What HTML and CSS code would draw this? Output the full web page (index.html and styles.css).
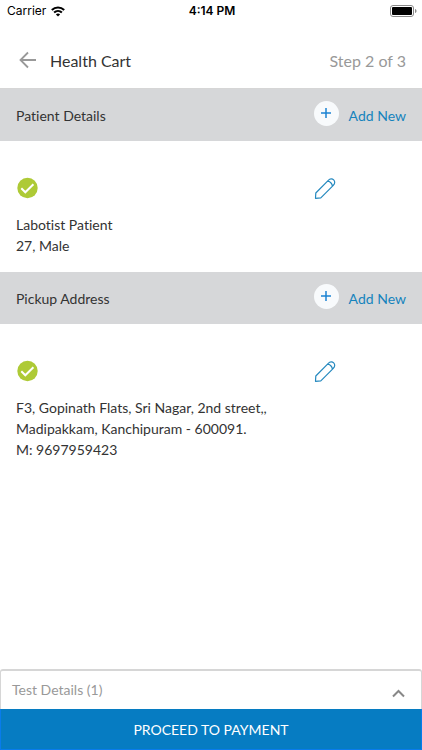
FILE: index.html
```html
<!DOCTYPE html>
<html lang="en">
<head>
<meta charset="utf-8">
<meta name="viewport" content="width=device-width, initial-scale=1">
<title>Health Cart</title>
<link rel="stylesheet" href="styles.css">
</head>
<body>
<div class="status">
  <div class="carrier">
    <span>Carrier</span>
    <svg width="14" height="11" viewBox="0 0 14 11" fill="none" stroke="#000" stroke-width="2"><path d="M.8 4C4.300.6 9.700.6 13.200 4M3.100 6.500C5.300 4.400 8.700 4.400 10.900 6.500"/><path d="M7 10.500 4.900 8.400C6.100 7.300 7.900 7.300 9.100 8.400Z" fill="#000" stroke="none"/></svg>
  </div>
  <span class="time">4:14 PM</span>
  <svg class="battery" width="27" height="12" viewBox="0 0 27 12"><rect x=".5" y=".5" width="23" height="11" rx="2.500" fill="#fff" stroke="#8a8a8a"/><rect x="2" y="2" width="20" height="8" rx="1" fill="#000"/><path d="M25 4c2 .6 2 3.400 0 4z" fill="#8a8a8a"/></svg>
</div>
<header class="header">
  <button class="icon-button" aria-label="Back">
    <svg width="18" height="18" viewBox="0 0 18 18" fill="none" stroke="#999" stroke-width="1.800"><path d="M17 9H2M9 1.500 1.500 9 9 16.500"/></svg>
  </button>
  <h1 class="title">Health Cart</h1>
  <span class="step">Step 2 of 3</span>
</header>
<main class="main">
  <section>
    <div class="bar">
      <h2 class="bar-title">Patient Details</h2>
      <button class="add"><span class="plus"><svg width="10" height="10" viewBox="0 0 10 10" stroke="#1b82d2" stroke-width="1.500"><path d="M5 0V10M0 5H10"/></svg></span>Add New</button>
    </div>
    <div class="entry">
      <div class="entry-icons">
        <svg width="22" height="22" viewBox="0 0 22 22" fill="none"><circle cx="11.500" cy="11" r="10.200" fill="#aeca36"/><path d="M5.300 11.300 9.300 15.300 17.400 7.200" stroke="#fff" stroke-width="2"/></svg>
        <button class="icon-button" aria-label="Edit patient">
          <svg width="22" height="22" viewBox="0 0 22 22" fill="none" stroke="#2589bf" stroke-width="1.200" stroke-linejoin="round"><path d="M1.500 21.300 1.800 16 14.300 3.300C16 1.500 18.300 1.500 19.700 2.900 21.100 4.300 21.100 6.600 19.300 8.300L6.800 20.800ZM13.400 4.200C16 4.300 18.300 6.500 18.400 9.200"/></svg>
        </button>
      </div>
      <p class="text">Labotist Patient<br>27, Male</p>
    </div>
  </section>
  <section>
    <div class="bar">
      <h2 class="bar-title">Pickup Address</h2>
      <button class="add"><span class="plus"><svg width="10" height="10" viewBox="0 0 10 10" stroke="#1b82d2" stroke-width="1.500"><path d="M5 0V10M0 5H10"/></svg></span>Add New</button>
    </div>
    <div class="entry">
      <div class="entry-icons">
        <svg width="22" height="22" viewBox="0 0 22 22" fill="none"><circle cx="11.500" cy="11" r="10.200" fill="#aeca36"/><path d="M5.300 11.300 9.300 15.300 17.400 7.200" stroke="#fff" stroke-width="2"/></svg>
        <button class="icon-button" aria-label="Edit address">
          <svg width="22" height="22" viewBox="0 0 22 22" fill="none" stroke="#2589bf" stroke-width="1.200" stroke-linejoin="round"><path d="M1.500 21.300 1.800 16 14.300 3.300C16 1.500 18.300 1.500 19.700 2.900 21.100 4.300 21.100 6.600 19.300 8.300L6.800 20.800ZM13.400 4.200C16 4.300 18.300 6.500 18.400 9.200"/></svg>
        </button>
      </div>
      <p class="text">F3, Gopinath Flats, Sri Nagar, 2nd street,,<br>Madipakkam, Kanchipuram - 600091.<br>M: 9697959423</p>
    </div>
  </section>
</main>
<footer class="footer">
  <button class="details">
    <span>Test Details (1)</span>
    <svg width="13" height="9" viewBox="0 0 13 9" fill="none" stroke="#888" stroke-width="2"><path d="M1 7.500 6.500 2 12 7.500"/></svg>
  </button>
  <button class="pay">PROCEED TO PAYMENT</button>
</footer>
</body>
</html>
```
FILE: styles.css
```css
* {
  box-sizing: border-box;
}

body {
  margin: 0;
  min-height: 100vh;
  display: flex;
  flex-direction: column;
  background: #fff;
  color: #333;
  font: 14px/21px Lato, "Liberation Sans", sans-serif;
  font-variant-ligatures: none;
}

button {
  margin: 0;
  padding: 0;
  border: 0;
  background: none;
  font: inherit;
  font-variant-ligatures: none;
  cursor: pointer;
}

svg {
  display: block;
}

h1,
h2,
p {
  margin: 0;
  font-weight: 400;
}

.status {
  display: grid;
  grid-template-columns: 1fr auto 1fr;
  align-items: center;
  height: 22px;
  padding: 0 5px 0 7px;
  color: #000;
  font: 12px/22px Inter, "Liberation Sans", sans-serif;
}

.carrier {
  display: flex;
  align-items: center;
  gap: 5px;
}

.time {
  font-weight: 600;
}

.battery {
  justify-self: end;
}

.header {
  display: flex;
  align-items: center;
  height: 67px;
  padding: 10px 16px 0 19px;
  border-bottom: 1px solid #d6d6d6;
}

.title {
  flex: 1;
  margin-left: 13px;
  font-size: 16px;
}

.step {
  color: #999;
  font-size: 16px;
}

.main {
  flex: 1;
}

.bar {
  display: flex;
  align-items: center;
  justify-content: space-between;
  height: 52px;
  padding: 0 16px;
  background: #d6d7d9;
}

.bar-title {
  font-size: 14px;
}

.add {
  display: flex;
  align-items: center;
  gap: 10px;
  color: #1583bd;
}

.plus {
  display: flex;
  align-items: center;
  justify-content: center;
  width: 25px;
  height: 25px;
  margin-bottom: 4px;
  border-radius: 50%;
  background: #f8fafc;
}

.entry {
  padding: 36px 16px;
  padding-bottom: 16px;
}

.entry-icons {
  display: flex;
  align-items: center;
  justify-content: space-between;
  margin-bottom: 15px;
  padding-right: 70px;
}

.footer {
  display: flex;
  flex-direction: column;
}

.details {
  display: flex;
  align-items: center;
  justify-content: space-between;
  height: 40px;
  padding: 0 16px 2px 11px;
  border: 1px solid #d6d6d6;
  border-top-width: 2px;
  border-bottom: 0;
  border-radius: 3px 3px 0 0;
  color: #999;
}

.details svg {
  margin-top: 8px;
}

.pay {
  height: 41px;
  border: 1px solid #087cec;
  border-top: 0;
  background: #067cc2;
  color: #fff;
}
```
